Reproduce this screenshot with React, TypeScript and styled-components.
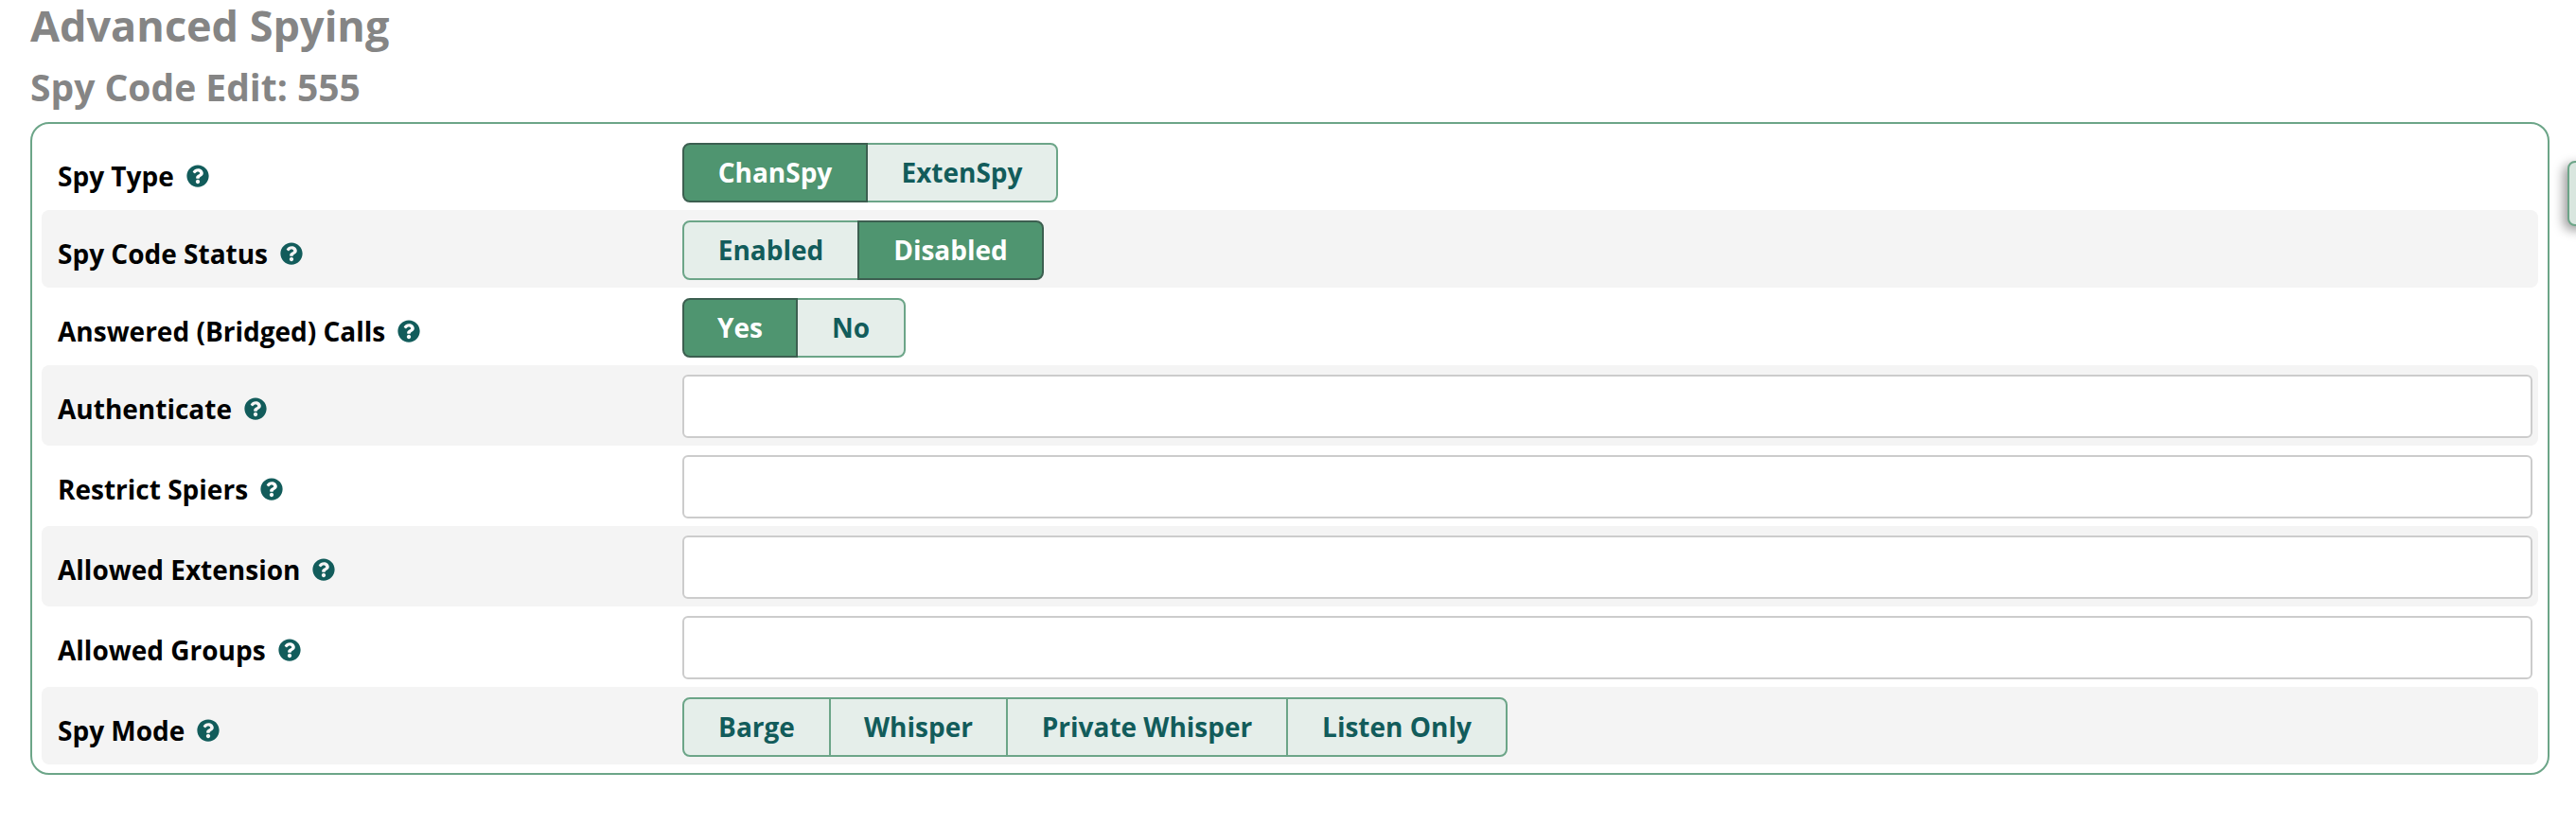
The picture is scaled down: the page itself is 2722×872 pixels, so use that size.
import React from "react";
import styled, { createGlobalStyle } from "styled-components";
import { FaQuestionCircle } from "react-icons/fa";

const Global = createGlobalStyle`
  html, body { margin: 0; padding: 0; background: #fff; }
  body { font-family: "Open Sans", "Liberation Sans", sans-serif; width: 2722px; height: 872px; overflow: hidden; }
`;

const Page = styled.div`
  position: relative;
  width: 2722px;
  height: 872px;
  padding: 0 28px 0 32px;
  box-sizing: border-box;
`;

const Title = styled.h1`
  margin: 0;
  height: 58px;
  line-height: 54px;
  font-size: 45px;
  font-weight: 700;
  color: #858585;
`;

const Subtitle = styled.h2`
  margin: 0;
  height: 71px;
  line-height: 67px;
  font-size: 39px;
  font-weight: 700;
  color: #858585;
`;

const Card = styled.div`
  box-sizing: border-box;
  border: 2px solid #6ca588;
  border-radius: 20px;
  padding: 9px 10px;
  display: flex;
  flex-direction: column;
`;

const Row = styled.div<{ $tall?: boolean }>`
  display: grid;
  grid-template-columns: 660px 1fr;
  align-items: center;
  box-sizing: border-box;
  height: ${(p) => (p.$tall ? 85 : 82)}px;
  border-radius: 8px;
  padding: 0 6px 0 17px;
  &:nth-child(even) { background: #f4f4f4; }
`;

const Label = styled.div<{ $tall?: boolean }>`
  display: flex;
  align-items: center;
  gap: 13px;
  font-size: 28px;
  font-weight: 700;
  color: #000;
  padding-top: ${(p) => (p.$tall ? 6 : 9)}px;
`;

const Help = styled(FaQuestionCircle)`
  width: 24px;
  height: 24px;
  color: #125c5b;
  flex: none;
  margin-top: 1px;
`;

const Group = styled.div`
  display: inline-flex;
  justify-self: start;
  height: 63px;
  margin-top: 2px;
`;

const Toggle = styled.div<{ $on?: boolean; $w: number }>`
  box-sizing: border-box;
  width: ${(p) => p.$w}px;
  display: flex;
  align-items: center;
  justify-content: center;
  font-size: 28px;
  font-weight: 700;
  background: ${(p) => (p.$on ? "#4f9570" : "#e5eeea")};
  color: ${(p) => (p.$on ? "#fff" : "#125c5b")};
  border: 2px solid ${(p) => (p.$on ? "#3c5f50" : "#6ca588")};
  margin-left: -2px;
  position: relative;
  z-index: ${(p) => (p.$on ? 1 : 0)};
  &:first-child { margin-left: 0; border-radius: 8px 0 0 8px; }
  &:last-child { border-radius: 0 8px 8px 0; }
`;

const TextField = styled.input`
  box-sizing: border-box;
  width: 100%;
  height: 67px;
  margin-top: 1px;
  background: #fff;
  border: 2px solid #cccccc;
  border-radius: 6px;
  padding: 0 16px;
  outline: none;
`;

const SideTab = styled.div`
  position: absolute;
  left: 2713px;
  top: 170px;
  width: 30px;
  height: 69px;
  box-sizing: border-box;
  background: #d9e6df;
  border: 2px solid #6ca588;
  border-radius: 8px;
  box-shadow: -4px 4px 12px rgba(0, 0, 0, 0.4);
`;

type Opt = { t: string; w: number; on?: boolean };

const toggles: { label: string; opts: Opt[] }[] = [
  { label: "Spy Type", opts: [{ t: "ChanSpy", w: 196, on: true }, { t: "ExtenSpy", w: 203 }] },
  { label: "Spy Code Status", opts: [{ t: "Enabled", w: 187 }, { t: "Disabled", w: 197, on: true }] },
  { label: "Answered (Bridged) Calls", opts: [{ t: "Yes", w: 122, on: true }, { t: "No", w: 116 }] },
];
const inputs = ["Authenticate", "Restrict Spiers", "Allowed Extension", "Allowed Groups"];
const modes: Opt[] = [
  { t: "Barge", w: 157 },
  { t: "Whisper", w: 189 },
  { t: "Private Whisper", w: 298 },
  { t: "Listen Only", w: 234 },
];

const Choice = ({ opts }: { opts: Opt[] }) => (
  <Group>
    {opts.map((o) => (
      <Toggle key={o.t} $on={o.on} $w={o.w}>{o.t}</Toggle>
    ))}
  </Group>
);

const FieldLabel = ({ text, tall }: { text: string; tall?: boolean }) => (
  <Label $tall={tall}>
    {text}
    <Help />
  </Label>
);

export default function App() {
  return (
    <Page>
      <Global />
      <Title>Advanced Spying</Title>
      <Subtitle>Spy Code Edit: 555</Subtitle>
      <Card>
        {toggles.map((r) => (
          <Row key={r.label}>
            <FieldLabel text={r.label} />
            <Choice opts={r.opts} />
          </Row>
        ))}
        {inputs.map((l) => (
          <Row key={l} $tall>
            <FieldLabel text={l} tall />
            <TextField />
          </Row>
        ))}
        <Row>
          <FieldLabel text="Spy Mode" />
          <Choice opts={modes} />
        </Row>
      </Card>
      <SideTab />
    </Page>
  );
}
